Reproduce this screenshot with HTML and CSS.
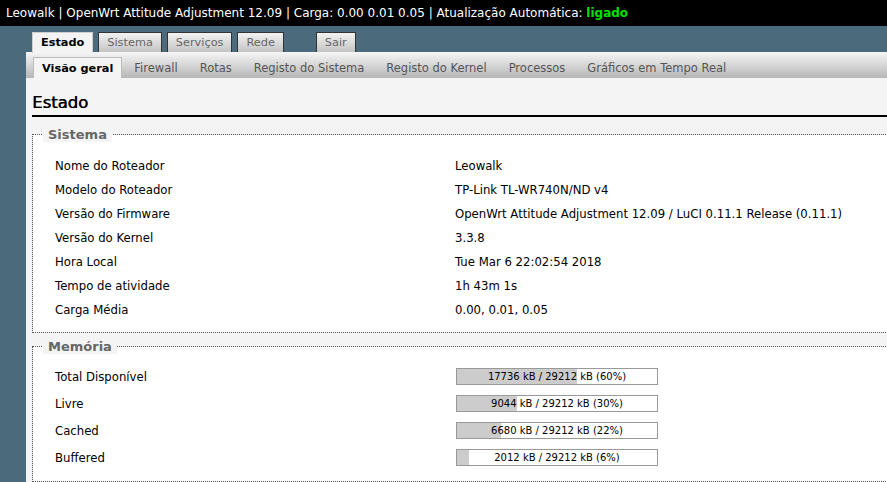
FILE: index.html
```html
<!DOCTYPE html>
<html lang="pt">
<head>
<meta charset="utf-8">
<title>Leowalk - Estado - LuCI</title>
<link rel="stylesheet" href="styles.css">
</head>
<body>
<div class="topbar">Leowalk | OpenWrt Attitude Adjustment 12.09 | Carga: 0.00 0.01 0.05 | Atualização Automática: <span class="on">ligado</span></div>
<div class="page">
  <ul class="tabs">
    <li class="tab active">Estado</li>
    <li class="tab">Sistema</li>
    <li class="tab">Serviços</li>
    <li class="tab">Rede</li>
    <li class="tab logout">Sair</li>
  </ul>
  <div class="panel">
    <ul class="subtabs">
      <li class="subtab active">Visão geral</li>
      <li class="subtab">Firewall</li>
      <li class="subtab">Rotas</li>
      <li class="subtab">Registo do Sistema</li>
      <li class="subtab">Registo do Kernel</li>
      <li class="subtab">Processos</li>
      <li class="subtab">Gráficos em Tempo Real</li>
    </ul>
    <div class="content">
      <h2 class="title">Estado</h2>
      <fieldset class="box">
        <legend class="legend">Sistema</legend>
        <div class="rows">
          <div class="row"><span class="label">Nome do Roteador</span><span class="value">Leowalk</span></div>
          <div class="row"><span class="label">Modelo do Roteador</span><span class="value">TP-Link TL-WR740N/ND v4</span></div>
          <div class="row"><span class="label">Versão do Firmware</span><span class="value">OpenWrt Attitude Adjustment 12.09 / LuCI 0.11.1 Release (0.11.1)</span></div>
          <div class="row"><span class="label">Versão do Kernel</span><span class="value">3.3.8</span></div>
          <div class="row"><span class="label">Hora Local</span><span class="value">Tue Mar 6 22:02:54 2018</span></div>
          <div class="row"><span class="label">Tempo de atividade</span><span class="value">1h 43m 1s</span></div>
          <div class="row"><span class="label">Carga Média</span><span class="value">0.00, 0.01, 0.05</span></div>
        </div>
      </fieldset>
      <fieldset class="box mem-box">
        <legend class="legend">Memória</legend>
        <div class="rows mem">
          <div class="row"><span class="label">Total Disponível</span><span class="value"><span class="bar"><span class="fill" style="width:60%"></span><span class="bartext">17736 kB / 29212 kB (60%)</span></span></span></div>
          <div class="row"><span class="label">Livre</span><span class="value"><span class="bar"><span class="fill" style="width:30%"></span><span class="bartext">9044 kB / 29212 kB (30%)</span></span></span></div>
          <div class="row"><span class="label">Cached</span><span class="value"><span class="bar"><span class="fill" style="width:22%"></span><span class="bartext">6680 kB / 29212 kB (22%)</span></span></span></div>
          <div class="row"><span class="label">Buffered</span><span class="value"><span class="bar"><span class="fill" style="width:6%"></span><span class="bartext">2012 kB / 29212 kB (6%)</span></span></span></div>
        </div>
      </fieldset>
    </div>
  </div>
</div>
</body>
</html>
```
FILE: styles.css
```css
html, body {
  margin: 0;
  padding: 0;
  overflow: hidden;
}
body {
  font-family: "DejaVu Sans", Verdana, sans-serif;
  font-size: 11.7px;
  color: #000;
  background: #4b6a7b;
  width: 887px;
  height: 482px;
}
.topbar {
  background: #000;
  color: #fff;
  height: 26px;
  line-height: 26px;
  padding-left: 6px;
  font-size: 12px;
  white-space: nowrap;
}
.topbar .on {
  color: #00e000;
  font-weight: bold;
}
.page {
  padding-left: 26px;
}
.tabs {
  list-style: none;
  margin: 0;
  padding: 6px 0 0 6px;
  display: flex;
  gap: 5px;
  height: 20px;
  align-items: flex-end;
}
.tab {
  height: 19px;
  line-height: 19px;
  padding: 0 8px;
  border: 1px solid #333;
  border-bottom: none;
  background: linear-gradient(#f2f2f2, #c4c4c4);
  color: #666;
  font-size: 11.3px;
}
.tab.active {
  background: #f4f4f4;
  color: #000;
  font-weight: bold;
  border-color: #cfcfcf;
  height: 20px;
  padding: 0 8px;
  margin-bottom: -1px;
  position: relative;
  z-index: 1;
}
.tab.logout {
  margin-left: 27px;
}
.panel {
  background: #f4f4f4;
  width: 900px;
  height: 500px;
}
.subtabs {
  list-style: none;
  margin: 0;
  padding: 5px 0 0 7px;
  height: 21px;
  display: flex;
  align-items: flex-end;
  background: linear-gradient(#f6f6f6, #b6b6b6);
}
.subtab {
  height: 21px;
  line-height: 22px;
  padding: 0 11px;
  color: #555;
  font-size: 11.5px;
}
.subtab.active {
  background: #f4f4f4;
  color: #000;
  font-weight: bold;
  font-size: 11.3px;
  border: 1px solid #bbb;
  border-bottom: none;
  height: 20px;
  padding: 0 8px;
  margin-right: 1px;
}
.content {
  padding: 15px 0 0 6px;
}
.title {
  margin: 0;
  font-size: 16.5px;
  font-weight: normal;
  line-height: 20px;
  padding-bottom: 2px;
  border-bottom: 2px solid #000;
  text-shadow: 0.5px 0 0 #000;
}
.box {
  margin: 10px 0 0 0;
  padding: 0;
  border: 1px dotted #555;
  background: #fff;
  background-clip: padding-box;
}
.mem-box {
  margin-top: 6px;
}
.legend {
  margin-left: 10px;
  padding: 0 5px;
  font-weight: bold;
  font-size: 13px;
  color: #666;
  background: #f4f4f4;
}
.rows {
  padding: 12px 0 10px 22px;
}
.row {
  display: flex;
  height: 24px;
  align-items: center;
}
.label {
  width: 400px;
}
.mem {
  padding-top: 9px;
  padding-bottom: 10px;
}
.mem .row {
  height: 27px;
}
.bar {
  display: block;
  position: relative;
  width: 200px;
  height: 15px;
  margin-left: 1px;
  border: 1px solid #999;
  background: #fff;
}
.fill {
  display: block;
  height: 100%;
  background: #ccc;
}
.bartext {
  position: absolute;
  left: 0;
  right: 0;
  top: 0;
  line-height: 15px;
  text-align: center;
  font-size: 10px;
}
```
